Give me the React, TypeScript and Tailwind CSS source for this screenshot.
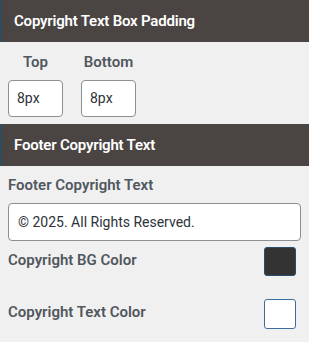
export default function App() {
  return (
    <div className="w-[309px] h-[342px] bg-[#f0f0f0] font-['Roboto',sans-serif] overflow-hidden">
      {/* Padding section */}
      <div className="h-[42px] bg-[#4a4543] border-l-2 border-[#2f4b5c] flex items-center pl-3">
        <span className="text-white text-[15px] font-semibold tracking-[-0.2px]">Copyright Text Box Padding</span>
      </div>
      <div className="flex gap-[18px] pl-2 pt-[11px] pb-[7px]">
        {['Top', 'Bottom'].map((label) => (
          <div key={label} className="flex flex-col items-center w-[55px]">
            <span className="text-[15px] font-semibold text-[#50575e] leading-[18px]">{label}</span>
            <div className="mt-[9px] w-[55px] h-[37px] bg-white border border-[#8c8f94] rounded-[4px] flex items-center pl-[8px] text-[14px] text-[#2c3338]">
              8px
            </div>
          </div>
        ))}
      </div>

      {/* Copyright text section */}
      <div className="h-[42px] bg-[#4a4543] border-l-2 border-[#2f4b5c] flex items-center pl-3">
        <span className="text-white text-[15px] font-semibold tracking-[-0.2px]">Footer Copyright Text</span>
      </div>
      <div className="px-2 pt-[10px]">
        <div className="text-[15px] font-semibold text-[#50575e] leading-[18px]">Footer Copyright Text</div>
        <div className="mt-[9px] h-[38px] w-[293px] bg-white border border-[#8c8f94] rounded-[4px] flex items-center pl-[9px] text-[14px] text-[#2c3338]">
          © 2025. All Rights Reserved.
        </div>
        <div className="mt-[6px] flex items-center justify-between pr-[5px]">
          <span className="text-[15px] font-semibold text-[#50575e] -mt-[3px]">Copyright BG Color</span>
          <div className="w-[32px] h-[29px] bg-[#333333] border border-[#2c4d6e] rounded-[3px]" />
        </div>
        <div className="mt-[23px] flex items-center justify-between pr-[5px]">
          <span className="text-[15px] font-semibold text-[#50575e] -mt-[3px]">Copyright Text Color</span>
          <div className="w-[32px] h-[30px] bg-white border border-[#3e6f9c] rounded-[3px]" />
        </div>
      </div>
    </div>
  );
}
